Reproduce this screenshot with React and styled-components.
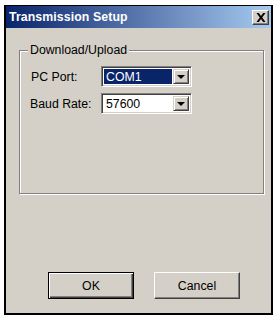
import React from 'react';
import styled, { createGlobalStyle } from 'styled-components';

const GlobalStyle = createGlobalStyle`
  html, body {
    margin: 0;
    padding: 0;
    background: #ffffff;
  }
  body {
    font-family: "Liberation Sans", Arial, sans-serif;
  }
`;

const Frame = styled.div`
  box-sizing: border-box;
  margin: 5px 0 0 4px;
  width: 269px;
  height: 310px;
  border: 2px solid #000;
  border-top-width: 1px;
  background: #d4d0c8;
  display: flex;
  flex-direction: column;
`;

const TitleBar = styled.div`
  height: 22px;
  display: flex;
  align-items: center;
  justify-content: space-between;
  padding: 0 2px 0 3px;
  background: linear-gradient(to right, #0a246a 0%, #a6caf0 100%);
`;

const Title = styled.span`
  color: #fff;
  font-weight: bold;
  font-size: 12.3px;
  letter-spacing: 0.1px;
`;

const CloseButton = styled.div`
  box-sizing: border-box;
  width: 17px;
  height: 15px;
  background: #d4d0c8;
  border-top: 1px solid #fff;
  border-left: 1px solid #fff;
  border-right: 1px solid #404040;
  border-bottom: 1px solid #404040;
  box-shadow: inset -1px -1px #808080;
  display: flex;
  align-items: center;
  justify-content: center;
`;

const Body = styled.div`
  flex: 1;
  display: flex;
  flex-direction: column;
  padding: 15px 0 14px 13px;
  font-size: 12.3px;
  color: #000;
`;

const Group = styled.fieldset`
  box-sizing: border-box;
  margin: 0;
  padding: 8px 0 0 10px;
  width: 245px;
  height: 151px;
  border: 1px solid #808080;
  box-shadow: inset 1px 1px #fff, 1px 1px #fff;
  min-width: 0;
`;

const Legend = styled.legend`
  margin-left: -2px;
  padding: 0 2px;
  background: #d4d0c8;
  line-height: 15px;
`;

const FormGrid = styled.div`
  display: grid;
  grid-template-columns: 71px 91px;
  row-gap: 6px;
  align-items: center;
`;

const Label = styled.span`
  padding-left: ${p => p.$indent || 0}px;
`;

const Combo = styled.div`
  box-sizing: border-box;
  height: 21px;
  display: flex;
  border-top: 1px solid #808080;
  border-left: 1px solid #808080;
  border-right: 1px solid #fff;
  border-bottom: 1px solid #fff;
  box-shadow: inset 1px 1px #404040, inset -1px -1px #d4d0c8;
  background: #fff;
  padding: 2px;
`;

const ComboText = styled.div`
  flex: 1;
  display: flex;
  align-items: center;
  padding-left: 2px;
  margin-right: 1px;
  background: ${p => (p.$selected ? '#0a246a' : '#fff')};
  color: ${p => (p.$selected ? '#fff' : '#000')};
`;

const DropButton = styled.div`
  box-sizing: border-box;
  width: 16px;
  background: #d4d0c8;
  border-top: 1px solid #d4d0c8;
  border-left: 1px solid #d4d0c8;
  border-right: 1px solid #404040;
  border-bottom: 1px solid #404040;
  box-shadow: inset 1px 1px #fff, inset -1px -1px #808080;
  display: flex;
  align-items: center;
  justify-content: center;
`;

const Arrow = styled.div`
  width: 0;
  height: 0;
  border-left: 4px solid transparent;
  border-right: 4px solid transparent;
  border-top: 4px solid #000;
`;

const ButtonRow = styled.div`
  margin-top: auto;
  display: flex;
  gap: 20px;
  padding-left: 29px;
`;

const Button = styled.div`
  box-sizing: border-box;
  width: 86px;
  height: 27px;
  display: flex;
  align-items: center;
  justify-content: center;
  background: #d4d0c8;
  border: 1px solid;
  border-color: ${p => (p.$default ? '#000' : '#fff #404040 #404040 #fff')};
  box-shadow: ${p =>
    p.$default
      ? 'inset 1px 1px #fff, inset -1px -1px #404040, inset -2px -2px #808080'
      : 'inset -1px -1px #808080'};
`;

const ComboBox = ({ value, selected }) => (
  <Combo>
    <ComboText $selected={selected}>{value}</ComboText>
    <DropButton>
      <Arrow />
    </DropButton>
  </Combo>
);

export default function App() {
  return (
    <>
      <GlobalStyle />
      <Frame>
        <TitleBar>
          <Title>Transmission Setup</Title>
          <CloseButton>
            <svg width="10" height="9" viewBox="0 0 10 9">
              <path d="M0.5 0h2.3l2.2 3 2.2-3h2.3L6.2 4.5 9.5 9H7.2L5 6 2.8 9H0.5l3.3-4.5z" fill="#000" />
            </svg>
          </CloseButton>
        </TitleBar>
        <Body>
          <Group>
            <Legend>Download/Upload</Legend>
            <FormGrid>
              <Label $indent={1}>PC Port:</Label>
              <ComboBox value="COM1" selected />
              <Label>Baud Rate:</Label>
              <ComboBox value="57600" />
            </FormGrid>
          </Group>
          <ButtonRow>
            <Button $default>OK</Button>
            <Button>Cancel</Button>
          </ButtonRow>
        </Body>
      </Frame>
    </>
  );
}
